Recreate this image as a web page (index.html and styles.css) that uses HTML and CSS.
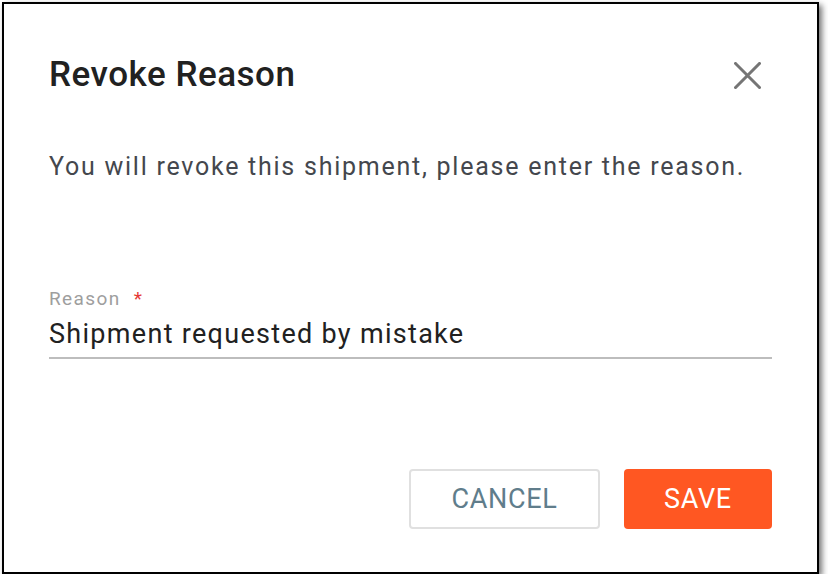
FILE: index.html
```html
<!DOCTYPE html>
<html>
<head>
<meta charset="utf-8">
<link rel="stylesheet" href="styles.css">
</head>
<body>
<div class="frame">
  <div class="header">
    <h1 class="title">Revoke Reason</h1>
    <button class="close" aria-label="Close">
      <svg width="27" height="27" viewBox="0 0 27 27"><path d="M1.5 1.5 L25.5 25.5 M25.5 1.5 L1.5 25.5" stroke="#757575" stroke-width="3" stroke-linecap="square" fill="none"/></svg>
    </button>
  </div>
  <p class="message">You will revoke this shipment, please enter the reason.</p>
  <div class="field">
    <label class="label">Reason <span class="req">*</span></label>
    <div class="value">Shipment requested by mistake</div>
  </div>
  <div class="actions">
    <button class="btn cancel">CANCEL</button>
    <button class="btn save">SAVE</button>
  </div>
</div>
</body>
</html>
```
FILE: styles.css
```css
html, body {
  margin: 0;
  padding: 0;
  background: #fff;
}
body {
  font-family: Roboto, "Noto Sans", sans-serif;
  padding: 2px 0 0 2px;
}
.frame {
  box-sizing: border-box;
  width: 817px;
  height: 572px;
  border: 2px solid #000;
  box-shadow: 3px 3px 6px rgba(0,0,0,0.55);
  background: #fff;
  padding: 0 45px 0 45px;
  display: flex;
  flex-direction: column;
}
.header {
  display: flex;
  justify-content: space-between;
  align-items: center;
  margin-top: 49px;
  height: 44px;
}
.title {
  margin: 0;
  font-size: 35px;
  font-weight: 500;
  color: #212121;
  line-height: 44px;
  letter-spacing: 0.5px;
}
.close {
  border: none;
  background: none;
  padding: 0;
  margin-right: 11px;
  width: 27px;
  height: 27px;
  display: flex;
}
.message {
  margin: 55px 0 0;
  font-size: 25px;
  line-height: 30px;
  color: #44474d;
  letter-spacing: 1.75px;
}
.field {
  margin-top: 106px;
  border-bottom: 2px solid #bdbdbd;
  padding-bottom: 6px;
}
.label {
  display: block;
  font-size: 19px;
  line-height: 22px;
  color: #9e9e9e;
  letter-spacing: 1.4px;
}
.req {
  color: #e53935;
  margin-left: 7px;
}
.value {
  margin-top: 7px;
  font-size: 27px;
  line-height: 34px;
  color: #212121;
  letter-spacing: 1.3px;
}
.actions {
  display: flex;
  justify-content: flex-end;
  gap: 24px;
  margin-top: 110px;
}
.btn {
  font-family: Roboto, sans-serif;
  font-size: 27px;
  height: 60px;
  border-radius: 4px;
  cursor: pointer;
  letter-spacing: 0.7px;
}
.cancel {
  width: 191px;
  background: #fff;
  border: 2px solid #e0e0e0;
  color: #607d8b;
}
.save {
  width: 148px;
  background: #ff5722;
  border: none;
  color: #fff;
}
```
